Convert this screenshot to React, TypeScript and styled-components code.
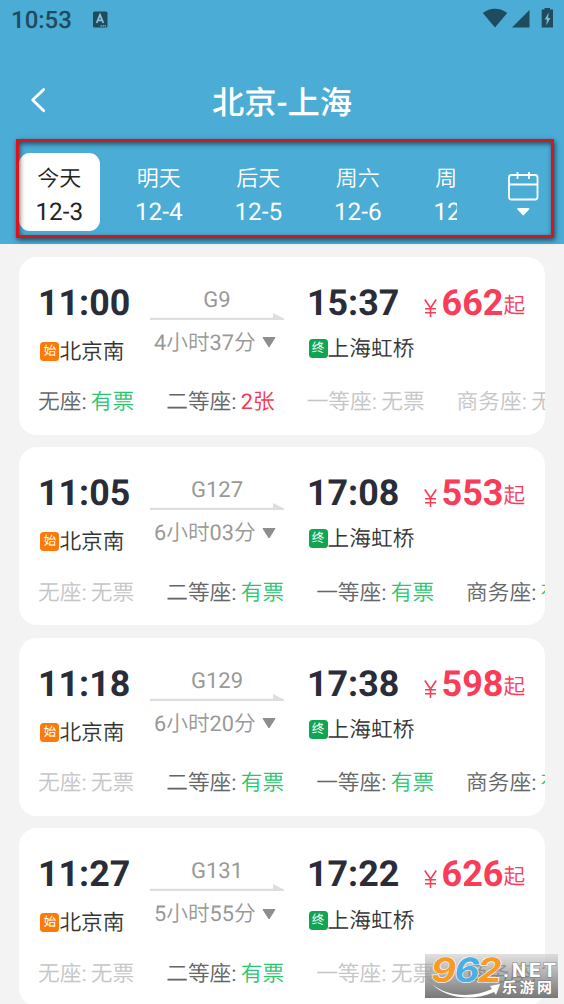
import React from 'react';
import styled, { createGlobalStyle } from 'styled-components';

const GlobalStyle = createGlobalStyle`
  * { box-sizing: border-box; }
  body {
    margin: 0;
    background: #f3f3f3;
    font-family: Roboto, "Noto Sans CJK SC", sans-serif;
    font-weight: 350;
    text-rendering: geometricPrecision;
  }
`;

const Screen = styled.div`
  position: relative;
  width: 564px;
  height: 1004px;
  overflow: hidden;
  background: #f3f3f3;
`;

const Header = styled.header`
  position: relative;
  height: 244px;
  background: #4bacd6;
  color: #fff;
`;

const StatusBar = styled.div`
  height: 38px;
  padding: 0 10px 0 11px;
  display: flex;
  align-items: center;
  color: #1f4b5e;
`;

const Clock = styled.span`
  width: 81px;
  font-size: 24px;
  font-weight: 500;
  line-height: 38px;
  padding-top: 1px;
`;

const StatusIcons = styled.svg`
  margin-left: auto;
`;

const TitleBar = styled.div`
  height: 115px;
  display: grid;
  grid-template-columns: 60px 1fr 60px;
  align-items: center;
  padding-top: 10px;
`;

const BackIcon = styled.svg`
  margin: -1px 0 0 28px;
`;

const Title = styled.h1`
  margin: 4px 0 0;
  text-align: center;
  font-size: 32.3px;
  line-height: 40px;
  font-weight: 500;
`;

const DateBar = styled.div`
  display: flex;
  padding-left: 19px;
`;

const DateTabs = styled.div`
  display: flex;
  gap: 19px;
  width: 438px;
  overflow: hidden;
`;

const DateTab = styled.div<{ $active?: boolean }>`
  flex: none;
  width: 80.5px;
  height: 78px;
  padding-top: 10px;
  border-radius: 11px;
  text-align: center;
  background: ${(p) => (p.$active ? '#fff' : 'transparent')};
  color: ${(p) => (p.$active ? '#222' : '#fff')};
`;

const DayName = styled.div`
  font-size: 22px;
  line-height: 34px;
`;

const DayDate = styled.div`
  font-size: 24.3px;
  font-weight: 400;
  line-height: 30px;
`;

const CalendarIcon = styled.svg`
  margin: 18px 0 0 50px;
`;

const Frame = styled.div`
  position: absolute;
  left: 16px;
  top: 139px;
  width: 538px;
  height: 99px;
  border: 3px solid #dc1318;
  box-shadow: 1px 2px 5px rgba(0, 0, 0, 0.6), inset 1px 2px 5px rgba(0, 0, 0, 0.55);
`;

const TripList = styled.main`
  display: flex;
  flex-direction: column;
  gap: 12.6px;
  padding: 12.5px 19px 0;
`;

const TripCard = styled.article`
  flex: none;
  height: 178px;
  padding: 26px 0 0 19px;
  border-radius: 18px;
  background: #fff;
  overflow: hidden;
`;

const TripTop = styled.div`
  display: grid;
  grid-template-columns: 112px 157px 116px 1fr;
  height: 103.5px;
`;

const Time = styled.div`
  font-size: 35.8px;
  font-weight: 700;
  line-height: 40px;
  color: #2a2d37;
`;

const Station = styled.div<{ $offset: number; $inset: number }>`
  display: flex;
  align-items: center;
  margin-top: ${(p) => p.$offset}px;
  padding-left: ${(p) => p.$inset}px;
  font-size: 21.7px;
  line-height: 32px;
  color: #333;
  white-space: nowrap;
`;

const Badge = styled.span<{ $color: string }>`
  flex: none;
  width: 19px;
  height: 19px;
  margin-top: -3px;
  border-radius: 3.5px;
  background: ${(p) => p.$color};
  color: #fff;
  font-size: 12.5px;
  font-weight: 400;
  line-height: 20px;
  text-align: center;
`;

const Route = styled.div`
  width: 134px;
  padding-top: 5px;
`;

const TrainNo = styled.div`
  text-align: center;
  font-size: 22px;
  font-weight: 400;
  line-height: 26px;
  color: #999;
`;

const RouteLine = styled.svg`
  display: block;
  margin-top: -1px;
`;

const Duration = styled.div`
  display: flex;
  align-items: center;
  gap: 6px;
  margin-top: 6px;
  padding-left: 4px;
  font-size: 21.7px;
  line-height: 34px;
  color: #999;
  white-space: nowrap;
`;

const DownArrow = styled.svg`
  margin-top: -2px;
`;

const Latin = styled.span`
  font-weight: 400;
`;

const Price = styled.div`
  display: flex;
  align-items: baseline;
  height: 40px;
  line-height: 40px;
  font-size: 21.7px;
  color: #f93c57;
  white-space: nowrap;
`;

const YenIcon = styled.svg`
  margin: 0 5px 0 0.5px;
  position: relative;
  top: 2px;
`;

const Amount = styled.span`
  font-size: 36px;
  font-weight: 700;
`;

const PriceSuffix = styled.span`
  position: relative;
  top: -2px;
`;

const Seats = styled.div`
  display: flex;
  gap: 32px;
  font-size: 21.7px;
  line-height: 34px;
  white-space: nowrap;
`;

const Seat = styled.div<{ $sold: boolean }>`
  display: flex;
  gap: 4.2px;
  flex: none;
  color: ${(p) => (p.$sold ? '#c6c6c6' : '#666')};
`;

const SeatValue = styled.span<{ $kind: Kind }>`
  color: ${(p) => ({ ok: '#2cc56f', few: '#f5384f', none: '#c6c6c6' })[p.$kind]};
`;

const Watermark = styled.div`
  position: absolute;
  left: 425px;
  top: 954px;
  width: 133px;
  height: 44px;
  background: linear-gradient(rgba(205, 205, 205, 0.6), rgba(105, 105, 105, 0.9));
`;

type Kind = 'ok' | 'few' | 'none';
type SeatInfo = [string, string, Kind];

interface Trip {
  depart: string;
  train: string;
  duration: string;
  arrive: string;
  price: string;
  seats: SeatInfo[];
}

const commonSeats: SeatInfo[] = [
  ['无座', '无票', 'none'],
  ['二等座', '有票', 'ok'],
  ['一等座', '有票', 'ok'],
  ['商务座', '有票', 'ok'],
];

const trips: Trip[] = [
  {
    depart: '11:00', train: 'G9', duration: '4小时37分', arrive: '15:37', price: '662',
    seats: [['无座', '有票', 'ok'], ['二等座', '2张', 'few'], ['一等座', '无票', 'none'], ['商务座', '无票', 'none']],
  },
  { depart: '11:05', train: 'G127', duration: '6小时03分', arrive: '17:08', price: '553', seats: commonSeats },
  { depart: '11:18', train: 'G129', duration: '6小时20分', arrive: '17:38', price: '598', seats: commonSeats },
  {
    depart: '11:27', train: 'G131', duration: '5小时55分', arrive: '17:22', price: '626',
    seats: [['无座', '无票', 'none'], ['二等座', '有票', 'ok'], ['一等座', '无票', 'none'], ['商务座', '1张', 'few']],
  },
];

const days = [['今天', '12-3'], ['明天', '12-4'], ['后天', '12-5'], ['周六', '12-6'], ['周日', '12-7']];

// Digits and colons take the regular weight beside the lighter Chinese glyphs.
function Mixed({ text }: { text: string }) {
  return (
    <span>
      {text.split(/([\d:]+)/).filter(Boolean).map((part, i) => (
        /[\d:]/.test(part) ? <Latin key={i}>{part}</Latin> : part
      ))}
    </span>
  );
}

function Card({ trip }: { trip: Trip }) {
  return (
    <TripCard>
      <TripTop>
        <div>
          <Time>{trip.depart}</Time>
          <Station $offset={14} $inset={2.4}><Badge $color="#fb7a0b">始</Badge>北京南</Station>
        </div>
        <Route>
          <TrainNo>{trip.train}</TrainNo>
          <RouteLine width="134" height="8" viewBox="0 0 134 8">
            <path d="M0 4.8H123V0L134 5.6V7H0Z" fill="#dedede" />
          </RouteLine>
          <Duration>
            <Mixed text={trip.duration} />
            <DownArrow width="14" height="11" viewBox="0 0 14 11"><path d="M1 .5H13L7 10Z" fill="#8e8e8e" stroke="#8e8e8e" strokeLinejoin="round" /></DownArrow>
          </Duration>
        </Route>
        <div>
          <Time>{trip.arrive}</Time>
          <Station $offset={11.3} $inset={1.6}><Badge $color="#10a552">终</Badge>上海虹桥</Station>
        </div>
        <Price>
          <YenIcon width="13" height="18" viewBox="0 0 13 18" fill="none" stroke="#f93c57" strokeWidth="1.6">
            <path d="M.8 .5L6.5 9L12.2 .5M6.5 9V18M1 9.8H12M1 13.8H12" />
          </YenIcon>
          <Amount>{trip.price}</Amount>
          <PriceSuffix>起</PriceSuffix>
        </Price>
      </TripTop>
      <Seats>
        {trip.seats.map(([name, value, kind]) => (
          <Seat key={name} $sold={kind === 'none'}>
            <Mixed text={`${name}:`} />
            <SeatValue $kind={kind}><Mixed text={value} /></SeatValue>
          </Seat>
        ))}
      </Seats>
    </TripCard>
  );
}

export default function App() {
  return (
    <Screen>
      <GlobalStyle />
      <Header>
        <StatusBar>
          <Clock>10:53</Clock>
          <svg width="16" height="17" viewBox="0 0 16 17">
            <rect x="1" y="0.5" width="14.5" height="16" rx="1.5" fill="#1f4b5e" />
            <path d="M4.6 12L8 3.8L11.4 12M5.8 9.4H10.2" fill="none" stroke="#8cc3da" strokeWidth="1.7" />
            <path d="M8.5 14.8H14" stroke="#8cc3da" strokeWidth="1.3" strokeDasharray="1.3 .8" />
          </svg>
          <StatusIcons width="72" height="22" viewBox="0 0 72 22" fill="#1f4b5e">
            <path d="M0.8 5C8 -.8 18 -.8 25.2 5L13 19.5Z" />
            <path d="M47.5 2V19.5H30Z" />
            <path d="M62.5 0H68V1.5H71V19.5H59.7V1.5H62.5Z" />
            <path d="M66.8 4.5L62.7 11.5H65L64.2 17.5L68.4 10H66Z" fill="#7fbdd6" />
          </StatusIcons>
        </StatusBar>
        <TitleBar>
          <BackIcon width="20" height="28" viewBox="0 0 20 28" fill="none" stroke="#fff" strokeWidth="2.8" strokeLinecap="round" strokeLinejoin="round">
            <path d="M15.7 3.4L4.7 14L15.7 24.7" />
          </BackIcon>
          <Title>北京-上海</Title>
        </TitleBar>
        <DateBar>
          <DateTabs>
            {days.map(([name, date], i) => (
              <DateTab key={date} $active={i === 0}>
                <DayName>{name}</DayName>
                <DayDate>{date}</DayDate>
              </DateTab>
            ))}
          </DateTabs>
          <CalendarIcon width="32" height="48" viewBox="0 0 32 48" fill="none" stroke="#fff" strokeWidth="1.8">
            <rect x="2" y="4" width="28.5" height="24.5" rx="2.5" />
            <path d="M2 13.5H30.5M10.5 1V8M22 1V8" />
            <path d="M11 38H21.5L16.3 43.5Z" fill="#fff" strokeLinejoin="round" />
          </CalendarIcon>
        </DateBar>
        <Frame />
      </Header>
      <TripList>
        {trips.map((trip) => <Card key={trip.train} trip={trip} />)}
      </TripList>
      <Watermark>
        <svg width="133" height="44" viewBox="0 0 133 44">
          <path d="M7 30C22 43 48 44 67 35L65 32L75 30L71 41L69 38C47 48 20 44 7 30Z" fill="#fff" />
          <g fontFamily="Inter, sans-serif" fontWeight="700" fontStyle="italic" fontSize="33.5" stroke="#fff" strokeWidth="1.2" paintOrder="stroke">
            <text x="6" y="28" fill="#f79a28" textLength="25" lengthAdjust="spacingAndGlyphs">9</text>
            <text x="29.5" y="28" fill="#4daee2" textLength="25" lengthAdjust="spacingAndGlyphs">6</text>
            <text x="52.5" y="28" fill="#f79a28" textLength="24" lengthAdjust="spacingAndGlyphs">2</text>
          </g>
          <g fill="#fff" stroke="#777" strokeWidth="1" paintOrder="stroke">
            <text x="78" y="22.5" fontFamily="Roboto, sans-serif" fontWeight="800" fontSize="20" textLength="53">.NET</text>
            <text x="77" y="39" fontFamily='"Noto Sans CJK SC", sans-serif' fontWeight="700" fontSize="15" textLength="50">乐游网</text>
          </g>
        </svg>
      </Watermark>
    </Screen>
  );
}
